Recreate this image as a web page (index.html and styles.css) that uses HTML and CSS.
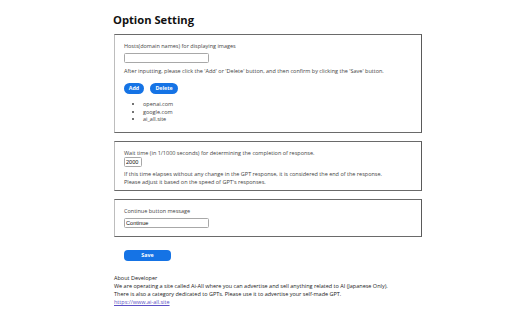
FILE: index.html
```html
<!DOCTYPE html>
<html>
<head>
<meta charset="utf-8">
<link rel="stylesheet" href="styles.css">
</head>
<body>
<div class="page">
  <h1 class="title">Option Setting</h1>

  <section class="box box-hosts">
    <div class="label">Hosts(domain names) for displaying images</div>
    <input class="field field-wide" type="text" value="">
    <p class="note">After inputting, please click the 'Add' or 'Delete' button, and then confirm by clicking the 'Save' button.</p>
    <div class="actions">
      <button class="btn btn-add">Add</button>
      <button class="btn btn-delete">Delete</button>
    </div>
    <ul class="hosts">
      <li>openai.com</li>
      <li>google.com</li>
      <li>ai_all.site</li>
    </ul>
  </section>

  <section class="box box-wait">
    <div class="label">Wait time (in 1/1000 seconds) for determining the completion of response.</div>
    <input class="field field-num" type="text" value="2000">
    <p class="note note-wait">If this time elapses without any change in the GPT response, it is considered the end of the response.<br>Please adjust it based on the speed of GPT's responses.</p>
  </section>

  <section class="box box-continue">
    <div class="label">Continue button message</div>
    <input class="field field-wide" type="text" value="Continue">
  </section>

  <button class="btn btn-save">Save</button>

  <div class="about">
    <div>About Developer</div>
    <div>We are operating a site called Ai-All where you can advertise and sell anything related to AI (Japanese Only).</div>
    <div>There is also a category dedicated to GPTs. Please use it to advertise your self-made GPT.</div>
    <div><a class="link" href="#">https://www.ai-all.site</a></div>
  </div>
</div>
</body>
</html>
```

FILE: styles.css
```css
html, body {
  margin: 0;
  padding: 0;
  background: #ffffff;
}

body {
  font-family: "Open Sans", "Noto Sans", sans-serif;
  font-size: 5.5px;
  color: #333333;
}

.page {
  width: 308px;
  padding: 12px 0 0 114px;
}

.title {
  margin: 0 0 7px -1px;
  font-size: 11.2px;
  line-height: 15px;
  font-weight: 700;
  color: #111111;
}

.box {
  border: 1px solid #6a6a6a;
  border-left-color: #bdbdbd;
  border-right: 1.5px solid #5a5a5a;
  padding: 7px 9px 8.5px 9px;
  margin-bottom: 7.5px;
}

.label {
  line-height: 8px;
  color: #444444;
}

.field {
  display: block;
  box-sizing: border-box;
  height: 10px;
  margin: 3px 0 0 0;
  padding: 0 1px;
  border: 1px solid #a8a8a8;
  border-radius: 1.5px;
  font-family: "Liberation Sans", sans-serif;
  font-size: 5.6px;
  color: #111111;
  background: #ffffff;
  outline: none;
}

.field-wide {
  width: 85px;
}

.field-num {
  width: 18px;
  margin-top: 0.5px;
}

.note {
  margin: 4px 0 0 0;
  line-height: 8px;
  color: #444444;
}

.note-wait {
  margin-top: 3px;
}

.box-wait {
  padding-bottom: 4px;
}

.actions {
  display: flex;
  gap: 6px;
  margin-top: 8px;
}

.btn {
  height: 11px;
  padding: 0;
  border: none;
  border-radius: 6px;
  background: #1573e5;
  color: #ffffff;
  font-family: "Open Sans", sans-serif;
  font-weight: 700;
  font-size: 5.3px;
  line-height: 11px;
  text-align: center;
}

.btn-add {
  width: 20px;
}

.btn-delete {
  width: 28px;
}

.btn-save {
  display: block;
  width: 47px;
  margin: 13px 0 0 10px;
  border-radius: 4px;
}

.hosts {
  margin: 7px 0 0 0;
  padding-left: 19px;
  line-height: 7.5px;
  color: #444444;
}

.box-continue {
  padding-bottom: 8.5px;
}

.about {
  margin-top: 13px;
  line-height: 8px;
  color: #222222;
}

.link {
  color: #5b4fc4;
  text-decoration: underline;
}
```
